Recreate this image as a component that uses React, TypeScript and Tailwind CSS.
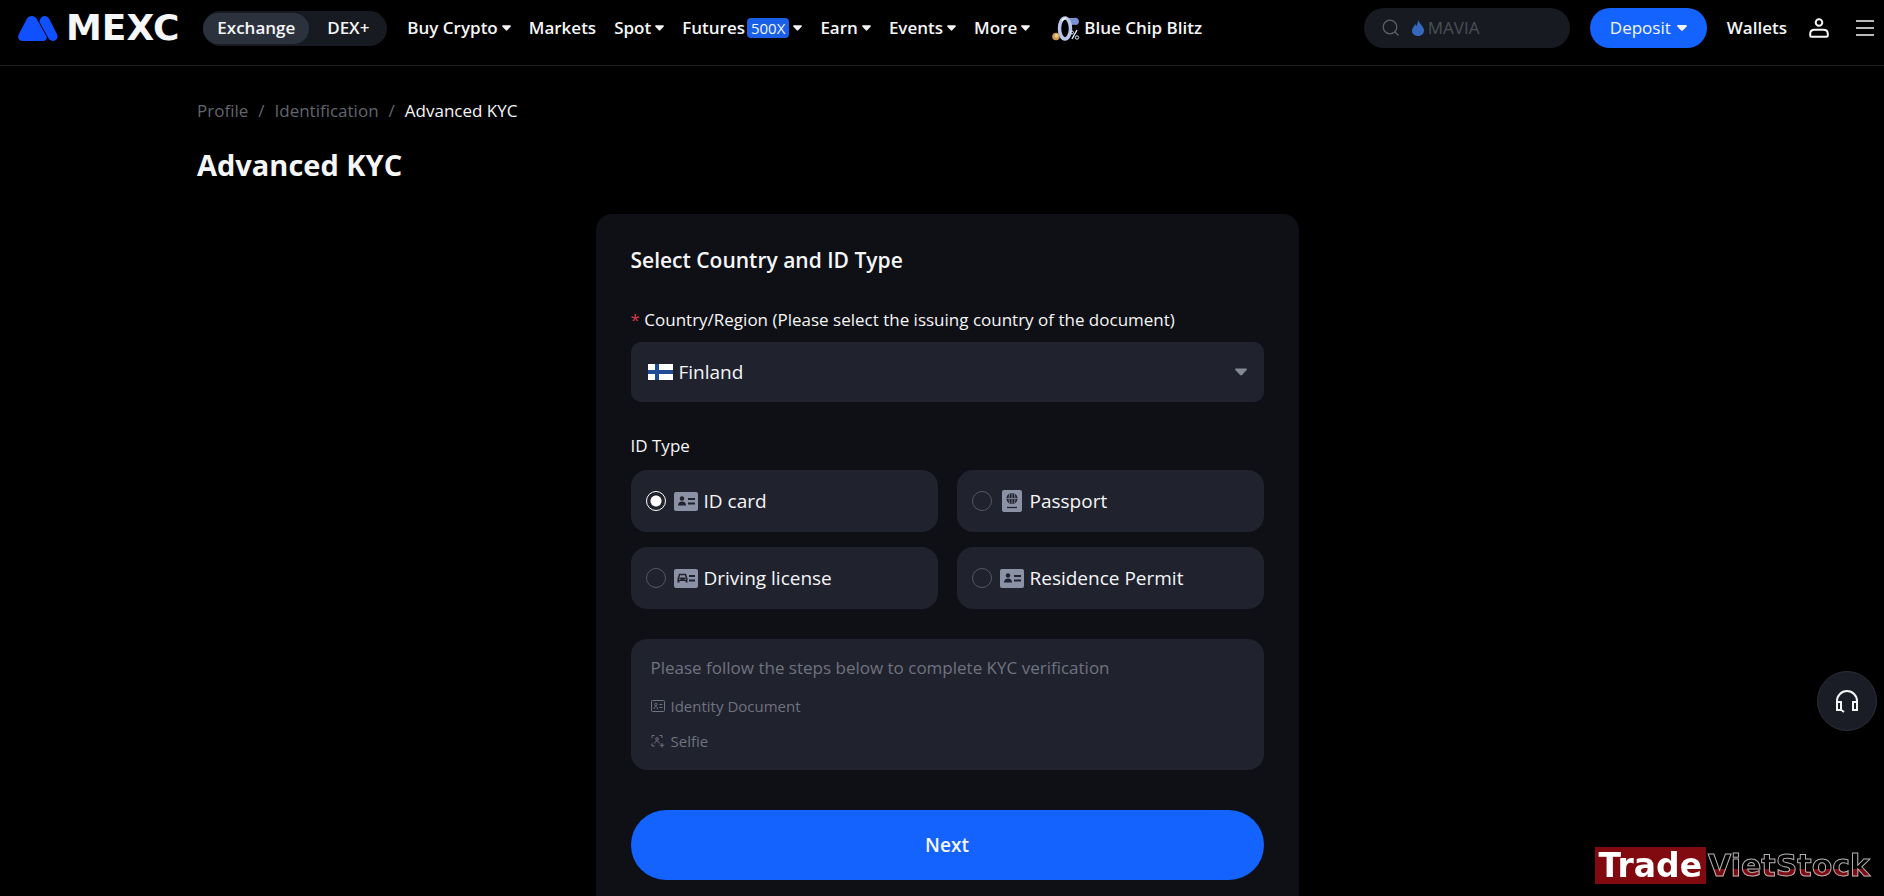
import React, { useState } from 'react';

type IdType = 'id-card' | 'passport' | 'driving-license' | 'residence-permit';

interface NavItem {
  label: string;
  badge?: string;
  menu?: boolean;
}

const NAV_ITEMS: NavItem[] = [
  { label: 'Buy Crypto', menu: true },
  { label: 'Markets' },
  { label: 'Spot', menu: true },
  { label: 'Futures', badge: '500X', menu: true },
  { label: 'Earn', menu: true },
  { label: 'Events', menu: true },
  { label: 'More', menu: true }
];

const COUNTRIES = ['Finland', 'Sweden', 'Norway', 'Denmark'];

function Caret({ className }: { className: string }) {
  return (
    <svg viewBox="0 0 10 6" className={className} fill="currentColor" aria-hidden="true">
      <path d="M1 0h8c.8 0 1.2.8.7 1.4L5.8 5.6c-.4.5-1.2.5-1.6 0L.3 1.4C-.2.8.2 0 1 0z" />
    </svg>
  );
}

function LogoMark() {
  return (
    <svg viewBox="0 0 40 25" className="h-[25px] w-10" fill="#1050ff" aria-hidden="true">
      <path d="M9 2.5C10.2.8 12 0 13.8 0c1.9 0 3.6.9 4.7 2.6l9.9 17.6c1.1 2.3-.5 4.8-3 4.8H4.8C1 25-1 21.5.7 18.5z" />
      <path d="M22 3.5C23 1.3 24.6 0 26.6 0c1.9 0 3.4 1 4.4 2.6l7.9 15.5c1.8 3.2-.3 6.9-3.7 6.9-2.2 0-3.7-1-4.7-2.8L21.8 6.5c-.5-1-.3-2 .2-3z" />
    </svg>
  );
}

function ZeroFeeIcon() {
  return (
    <svg viewBox="0 0 28 25" className="h-[25px] w-7" fill="none" aria-hidden="true">
      <path d="M16 2h6c2-1 5 .5 5 3.500S24 10 22 8.500l-4 1z" fill="#7b8fd4" />
      <ellipse cx="13" cy="12.500" rx="5.500" ry="10.500" stroke="#b8c6ea" strokeWidth="3.500" />
      <path d="M10 5c1-2 3-3 4-2.500" stroke="#fff" strokeWidth="1.500" />
      <path d="M25 14l-5 9" stroke="#e4e9f7" strokeWidth="1.500" />
      <circle cx="20" cy="16.500" r="1.500" stroke="#e4e9f7" />
      <circle cx="25" cy="21.500" r="1.700" stroke="#e4e9f7" />
      <circle cx="4" cy="20.500" r="3.800" fill="#c9974f" />
      <circle cx="4.500" cy="19.800" r="2" fill="#eac88a" />
    </svg>
  );
}

function PersonCardIcon() {
  return (
    <svg viewBox="0 0 24 19" className="h-[19px] w-6" aria-hidden="true">
      <rect width="24" height="19" rx="2" fill="#8b92a6" />
      <circle cx="8" cy="6.500" r="2.200" fill="#20222d" />
      <path d="M4 13.500c0-2.500 1.800-4 4-4s4 1.500 4 4z" fill="#20222d" />
      <path d="M14 7h7M14 11.500h7" stroke="#20222d" strokeWidth="1.800" />
    </svg>
  );
}

function CarCardIcon() {
  return (
    <svg viewBox="0 0 24 19" className="h-[19px] w-6" aria-hidden="true">
      <rect width="24" height="19" rx="2" fill="#8b92a6" />
      <path d="M4.500 8.500L5.600 5.500h5.800l1.100 3" fill="none" stroke="#20222d" strokeWidth="1.500" />
      <path d="M3.500 8.500h10v5h-2V12h-6v1.500h-2z" fill="#20222d" />
      <path d="M5 10.200h1.500M10.500 10.200H12" stroke="#8b92a6" />
      <path d="M15 7h6M15 11.500h6" stroke="#20222d" strokeWidth="1.800" />
    </svg>
  );
}

function PassportIcon() {
  return (
    <svg viewBox="0 0 24 22" className="h-[22px] w-6" aria-hidden="true">
      <rect x="2" width="20" height="22" rx="2" fill="#8b92a6" />
      <circle cx="12" cy="8.500" r="5.500" fill="#20222d" />
      <path d="M6.500 8.500h11M12 3v11M9.800 3.500c-1 3-1 7 0 10M14.200 3.500c1 3 1 7 0 10" stroke="#8b92a6" strokeWidth=".8" fill="none" />
      <path d="M7 17.500h10" stroke="#20222d" strokeWidth="1.300" />
    </svg>
  );
}

const ID_TYPES: { id: IdType; label: string; icon: React.ReactNode }[] = [
  { id: 'id-card', label: 'ID card', icon: <PersonCardIcon /> },
  { id: 'passport', label: 'Passport', icon: <PassportIcon /> },
  { id: 'driving-license', label: 'Driving license', icon: <CarCardIcon /> },
  { id: 'residence-permit', label: 'Residence Permit', icon: <PersonCardIcon /> }
];

function Header() {
  return (
    <header className="flex h-[66px] shrink-0 items-start justify-between border-b border-[#1e1f22] pl-[18px] pr-2.5">
      <div className="flex h-14 items-center">
        <a href="#home" className="flex items-center gap-2" aria-label="MEXC home">
          <LogoMark />
          <span className="font-['DejaVu_Sans'] text-[36px] leading-9 font-bold">MEXC</span>
        </a>

        <div className="ml-6 flex h-[35px] w-[184px] items-center rounded-full bg-[#171a21] text-[17px] font-semibold">
          <button className="h-[31px] w-[106px] rounded-full bg-[#2c313e]">Exchange</button>
          <button className="flex-1">DEX+</button>
        </div>

        <nav className="ml-5 flex items-center gap-[18px] text-[17px] font-semibold">
          {NAV_ITEMS.map((item) => (
            <a key={item.label} href="#nav" className="flex items-center gap-1 whitespace-nowrap">
              <span className="flex items-center gap-0.5">
                {item.label}
                {item.badge && (
                  <span className="rounded bg-[#1a5fe8] px-1 text-[15px] leading-5 font-normal">{item.badge}</span>
                )}
              </span>
              {item.menu && <Caret className="h-1.5 w-[9px]" />}
            </a>
          ))}
          <a href="#blitz" className="ml-1 flex items-center gap-1 whitespace-nowrap">
            <ZeroFeeIcon />
            Blue Chip Blitz
          </a>
        </nav>
      </div>

      <div className="flex h-14 items-center">
        <label className="flex h-10 w-[206px] items-center rounded-full bg-[#171a21] pl-[18px]">
          <svg viewBox="0 0 18 18" className="h-[18px] w-[18px] text-[#5b5f6a]" fill="none" stroke="currentColor" strokeWidth="1.300" aria-hidden="true">
            <circle cx="8" cy="8" r="6.800" />
            <path d="M13 13l3.500 3.500" />
          </svg>
          <svg viewBox="0 0 12 16" className="ml-3 h-4 w-3" fill="#3568bd" aria-hidden="true">
            <path d="M6 0c1 3 6 6.500 6 10.500C12 13.800 9.300 16 6 16s-6-2.200-6-5.500C0 8 2.500 6.500 3 4c.8.700 1 1.500 1.200 2.200C5.500 4.500 6 2 6 0z" />
          </svg>
          <input
            type="search"
            aria-label="Search"
            placeholder="MAVIA"
            className="ml-1 w-28 bg-transparent text-[17px] outline-none placeholder:text-[#4b4e57]"
          />
        </label>
        <button className="ml-5 flex h-10 w-[117px] items-center justify-center gap-1.5 rounded-full bg-[#1463ff] text-[17px]">
          Deposit
          <Caret className="h-1.5 w-2.5" />
        </button>
        <a href="#wallets" className="ml-5 text-[17px] font-semibold">Wallets</a>
        <button aria-label="Account" className="ml-[22px]">
          <svg viewBox="0 0 20 20" className="h-5 w-5" fill="none" stroke="currentColor" strokeWidth="2" aria-hidden="true">
            <circle cx="10" cy="4.500" r="3.300" />
            <path d="M1.200 16c0-3 2-4.300 4.300-4.300h9c2.300 0 4.300 1.300 4.300 4.300v1.500c0 .9-.5 1.300-1.300 1.300h-15c-.8 0-1.300-.4-1.300-1.300z" />
          </svg>
        </button>
        <button aria-label="Menu" className="ml-[27px]">
          <svg viewBox="0 0 18 16" className="h-4 w-[18px]" stroke="currentColor" strokeWidth="1.500" aria-hidden="true">
            <path d="M0 1h18M0 8h18M0 15h18" />
          </svg>
        </button>
      </div>
    </header>
  );
}

export default function App() {
  const [country, setCountry] = useState<string>('Finland');
  const [idType, setIdType] = useState<IdType>('id-card');

  return (
    <div className="flex min-h-screen flex-col bg-black font-['Open_Sans',sans-serif] text-[#f5f6f8]">
      <Header />

      <main className="flex flex-1 flex-col pl-[197px] pr-[187px]">
        <nav aria-label="Breadcrumb" className="mt-[33px] flex gap-2.5 text-[17px] leading-6 text-[#62656e]">
          <a href="#profile">Profile</a>
          <span>/</span>
          <a href="#identification">Identification</a>
          <span>/</span>
          <span className="text-[#f5f6f8]">Advanced KYC</span>
        </nav>
        <h1 className="mt-[22px] text-[29px] leading-10 font-bold">Advanced KYC</h1>

        <form
          onSubmit={(e) => e.preventDefault()}
          className="mt-[29px] flex w-full max-w-[703px] flex-1 flex-col self-center rounded-t-2xl bg-[#0f1015] px-[35px] pt-8 pb-4"
        >
          <h2 className="text-[21px] leading-7 font-semibold">Select Country and ID Type</h2>

          <label htmlFor="country" className="mt-[34px] text-[17px] leading-6">
            <span className="text-[#d83a4a]">*</span> Country/Region (Please select the issuing country of the document)
          </label>
          <div className="mt-2.5 flex h-[60px] items-center rounded-[10px] bg-[#20222d] px-[17px]">
            <svg viewBox="0 0 25 16" className="h-4 w-[25px]" aria-hidden="true">
              <path d="M0 0h25v16H0z" fill="#fff" />
              <path d="M0 8h25M9 0v16" stroke="#1f4a94" strokeWidth="4" />
            </svg>
            <select
              id="country"
              value={country}
              onChange={(e) => setCountry(e.target.value)}
              className="h-full flex-1 appearance-none bg-transparent pl-1.5 text-[19px] outline-none"
            >
              {COUNTRIES.map((name) => (
                <option key={name}>{name}</option>
              ))}
            </select>
            <Caret className="h-2 w-3 text-[#858995]" />
          </div>

          <fieldset className="mt-8">
            <legend className="text-[17px] leading-6">ID Type</legend>
            <div className="mt-3 grid grid-cols-2 gap-x-[19px] gap-y-[15px]">
              {ID_TYPES.map((type) => (
                <label key={type.id} className="flex h-[62px] items-center rounded-2xl bg-[#20222d] pl-[15px] text-[19px]">
                  <input
                    type="radio"
                    name="id-type"
                    checked={idType === type.id}
                    onChange={() => setIdType(type.id)}
                    className="mr-2 h-5 w-5 appearance-none rounded-full border border-[#555864] checked:border-white checked:bg-[radial-gradient(circle,#fff_5px,transparent_6px)]"
                  />
                  {type.icon}
                  <span className="ml-1.5">{type.label}</span>
                </label>
              ))}
            </div>
          </fieldset>

          <section className="mt-[30px] rounded-2xl bg-[#20222d] px-5 py-[17px] text-[#6f7380]">
            <p className="text-[17px] leading-6">Please follow the steps below to complete KYC verification</p>
            <ul className="mt-3.5 flex flex-col gap-[11px] text-[15px] leading-6">
              <li className="flex items-center gap-1.5">
                <svg viewBox="0 0 14 12" className="h-3 w-3.5" fill="none" stroke="currentColor" aria-hidden="true">
                  <rect x=".5" y=".5" width="13" height="11" rx="1" />
                  <circle cx="4.800" cy="4.500" r="1.200" />
                  <path d="M3 9c0-1.500.8-2.300 1.800-2.300S6.600 7.500 6.600 9M8.500 4.500h3M8.500 7.500h3" />
                </svg>
                Identity Document
              </li>
              <li className="flex items-center gap-1.5">
                <svg viewBox="0 0 14 14" className="h-3.5 w-3.5" fill="none" stroke="currentColor" aria-hidden="true">
                  <path d="M1 4V1.500h2.500M8.500 1.500H11V4M1 9.500V12h2.500M11 9v4.500M8.700 11.200h4.600" />
                  <circle cx="6" cy="5" r="1.300" />
                  <path d="M3.800 9.500c0-1.600 1-2.500 2.200-2.500s2.200.9 2.200 2.500" />
                </svg>
                Selfie
              </li>
            </ul>
          </section>

          <button type="submit" className="mt-10 h-[70px] rounded-full bg-[#1463ff] text-[19px] font-semibold">
            Next
          </button>
        </form>
      </main>

      {/* Support launcher */}
      <button
        aria-label="Customer support"
        className="fixed right-[7px] bottom-[165px] flex h-[60px] w-[60px] items-center justify-center rounded-full border border-[#2b2e36] bg-[#1a1d26]"
      >
        <svg viewBox="0 0 24 24" className="h-6 w-6" fill="none" stroke="currentColor" strokeWidth="2" aria-hidden="true">
          <path d="M2 13v-1a10 10 0 0 1 20 0v1" />
          <path d="M2 13h4v8H2zM18 13h4v8h-4zM5 20l4 3" />
        </svg>
      </button>

      <div className="fixed right-3.5 bottom-3 flex items-center gap-0.5 font-['DejaVu_Sans'] font-bold whitespace-nowrap">
        <span className="bg-[#800a10] px-1 text-[33px] leading-[37px] text-white">Trade</span>
        <span className="bg-linear-to-b from-black from-60% to-[#7c0c12] to-60% bg-clip-text text-[30px] leading-[37px] text-transparent [-webkit-text-stroke:1px_#b5b0b0]">
          VietStock
        </span>
      </div>
    </div>
  );
}
